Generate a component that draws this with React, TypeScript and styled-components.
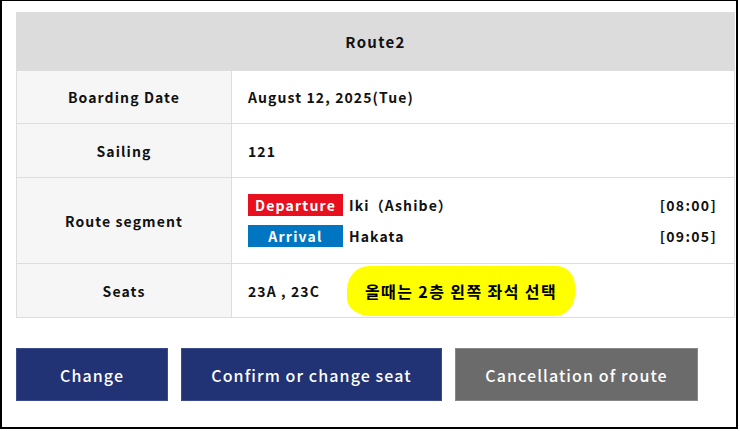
import React from "react";
import styled, { createGlobalStyle } from "styled-components";

const GlobalStyle = createGlobalStyle`
  html, body {
    margin: 0;
    padding: 0;
    background: #ffffff;
  }
  body {
    font-family: "Noto Sans CJK JP", "Noto Sans", sans-serif;
    color: #111111;
  }
`;

const Frame = styled.div`
  box-sizing: border-box;
  width: 738px;
  height: 429px;
  border: 2px solid #000000;
  border-top-width: 1px;
  padding: 11px 0 0 14px;
`;

const RouteTable = styled.table`
  border-collapse: collapse;
  width: 719px;
  table-layout: fixed;
`;

const LabelCol = styled.col`
  width: 215px;
`;

const HeaderCell = styled.th`
  background-color: #dcdcdc;
  border: 1px solid #dddddd;
  height: 57px;
  padding: 0;
  font-size: 15px;
  font-weight: 700;
  letter-spacing: 1.3px;
  text-align: center;
`;

const LabelCell = styled.th<{ $h: number }>`
  height: ${(p) => p.$h}px;
  background-color: #f6f6f6;
  border: 1px solid #dddddd;
  padding: 0;
  font-size: 14px;
  font-weight: 700;
  letter-spacing: 1.1px;
  text-align: center;
`;

const ValueCell = styled.td`
  border: 1px solid #dddddd;
  padding: 0 17px 0 16px;
  font-size: 14px;
  font-weight: 700;
  letter-spacing: 1.1px;
`;

const SegmentList = styled.div`
  display: flex;
  flex-direction: column;
  gap: 9px;
`;

const SegmentRow = styled.div`
  display: flex;
  align-items: center;
`;

const Badge = styled.span<{ $color: string }>`
  display: inline-flex;
  align-items: center;
  justify-content: center;
  box-sizing: border-box;
  width: 95px;
  height: 22px;
  margin-right: 6px;
  background-color: ${(p) => p.$color};
  color: #ffffff;
  font-size: 14px;
  letter-spacing: 1.2px;
`;

const Place = styled.span`
  flex: 1;
`;

const Time = styled.span`
  letter-spacing: 1.3px;
`;

const SeatLine = styled.div`
  display: flex;
  align-items: center;
`;

const Seats = styled.span`
  width: 99px;
`;

const Highlight = styled.span`
  display: inline-flex;
  align-items: center;
  justify-content: center;
  width: 228px;
  height: 50px;
  background-color: #ffff00;
  border-radius: 22px 18px 20px 24px / 24px 20px 22px 18px;
  color: #000000;
  font-size: 16px;
  font-weight: 700;
  letter-spacing: 1.4px;
`;

const ButtonBar = styled.div`
  display: flex;
  gap: 13px;
  margin-top: 30px;
`;

const ActionButton = styled.button<{ $w: number; $bg: string; $edge: string }>`
  box-sizing: border-box;
  width: ${(p) => p.$w}px;
  height: 53px;
  background-color: ${(p) => p.$bg};
  border: 1px solid ${(p) => p.$edge};
  color: #ffffff;
  font-family: "Noto Sans CJK JP", "Noto Sans", sans-serif;
  font-size: 16px;
  font-weight: 500;
  letter-spacing: 1.1px;
  padding: 0;
  cursor: pointer;
`;

const App: React.FC = () => {
  return (
    <>
      <GlobalStyle />
      <Frame>
        <RouteTable>
          <colgroup>
            <LabelCol />
            <col />
          </colgroup>
          <thead>
            <tr>
              <HeaderCell colSpan={2}>Route2</HeaderCell>
            </tr>
          </thead>
          <tbody>
            <tr>
              <LabelCell $h={52}>Boarding Date</LabelCell>
              <ValueCell>August 12, 2025(Tue)</ValueCell>
            </tr>
            <tr>
              <LabelCell $h={53}>Sailing</LabelCell>
              <ValueCell>121</ValueCell>
            </tr>
            <tr>
              <LabelCell $h={85}>Route segment</LabelCell>
              <ValueCell>
                <SegmentList>
                  <SegmentRow>
                    <Badge $color="#e8101e">Departure</Badge>
                    <Place>Iki（Ashibe）</Place>
                    <Time>[08:00]</Time>
                  </SegmentRow>
                  <SegmentRow>
                    <Badge $color="#0075c1">Arrival</Badge>
                    <Place>Hakata</Place>
                    <Time>[09:05]</Time>
                  </SegmentRow>
                </SegmentList>
              </ValueCell>
            </tr>
            <tr>
              <LabelCell $h={53}>Seats</LabelCell>
              <ValueCell>
                <SeatLine>
                  <Seats>23A , 23C</Seats>
                  <Highlight>올때는 2층 왼쪽 좌석 선택</Highlight>
                </SeatLine>
              </ValueCell>
            </tr>
          </tbody>
        </RouteTable>
        <ButtonBar>
          <ActionButton $w={152} $bg="#213275" $edge="#3a4a8a">
            Change
          </ActionButton>
          <ActionButton $w={261} $bg="#213275" $edge="#3a4a8a">
            Confirm or change seat
          </ActionButton>
          <ActionButton $w={243} $bg="#6b6b6b" $edge="#888888">
            Cancellation of route
          </ActionButton>
        </ButtonBar>
      </Frame>
    </>
  );
};

export default App;
